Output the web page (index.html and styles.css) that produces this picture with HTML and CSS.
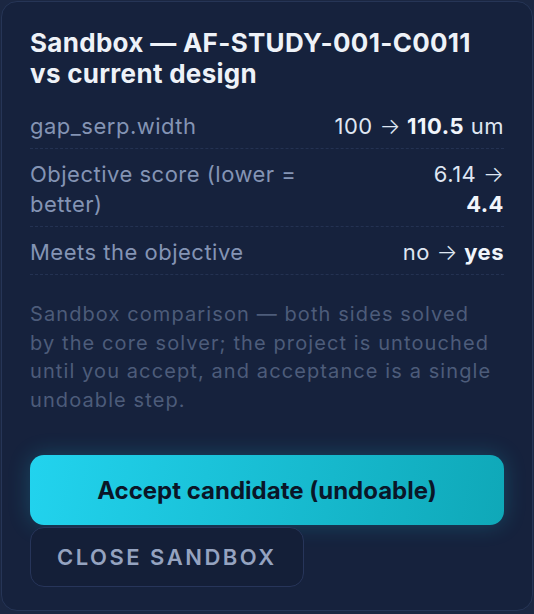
FILE: index.html
```html
<!DOCTYPE html>
<html lang="en">
<head>
    <meta charset="UTF-8">
    <meta name="viewport" content="width=device-width, initial-scale=1.0">
    <title>Sandbox comparison</title>
    <link rel="stylesheet" href="styles.css">
</head>
<body>
    <div class="sandbox-card">
        <h2 class="title">Sandbox — AF-STUDY-001-C0011 vs current design</h2>

        <div class="compare">
            <div class="compare-row">
                <span class="label">gap_serp.width</span>
                <span class="value">100 <span class="arrow">→</span> <strong>110.5</strong> um</span>
            </div>
            <div class="compare-row">
                <span class="label">Objective score (lower = better)</span>
                <span class="value">6.14 <span class="arrow">→</span> <strong>4.4</strong></span>
            </div>
            <div class="compare-row">
                <span class="label">Meets the objective</span>
                <span class="value">no <span class="arrow">→</span> <strong>yes</strong></span>
            </div>
        </div>

        <p class="note">Sandbox comparison — both sides solved by the core solver; the project is untouched until you accept, and acceptance is a single undoable step.</p>

        <div class="actions">
            <button class="btn-accept">Accept candidate (undoable)</button>
            <button class="btn-close">Close sandbox</button>
        </div>
    </div>
</body>
</html>
```

FILE: styles.css
```css
body {
    margin: 0;
    padding: 1px;
    background: #1b2742;
    font-family: 'Inter', 'Noto Sans', sans-serif;
    color: #e2e8f0;
}

.sandbox-card {
    background: #16223d;
    border: 1px solid #263556;
    border-radius: 16px;
    padding: 25px 28px 23px;
}

.title {
    margin: 0 0 12px;
    font-size: 26px;
    line-height: 31px;
    font-weight: 700;
    letter-spacing: 0.3px;
    color: #eef2f8;
}

.compare-row {
    display: flex;
    justify-content: space-between;
    gap: 24px;
    padding: 10px 0 7px;
    border-bottom: 1px dashed #243252;
    font-size: 22px;
    line-height: 30px;
    letter-spacing: 0.5px;
}

.label {
    color: #8494b4;
}

.value {
    color: #dfe6f2;
    text-align: right;
}

.value strong {
    color: #f1f5fb;
    font-weight: 700;
}

.arrow {
    font-weight: 300;
    letter-spacing: 0;
}

.note {
    margin: 25px 0 0;
    padding-right: 10px;
    font-size: 20px;
    line-height: 28.5px;
    letter-spacing: 1.1px;
    color: #4d5c7a;
}

.actions {
    margin-top: 41px;
    display: flex;
    flex-direction: column;
    align-items: flex-start;
    gap: 2px;
}

button {
    font-family: inherit;
    cursor: pointer;
}

.btn-accept {
    width: 100%;
    height: 70px;
    border: none;
    border-radius: 14px;
    background: linear-gradient(100deg, #22d3ee 0%, #0fa8b8 100%);
    color: #0a1628;
    font-size: 24px;
    font-weight: 700;
    box-shadow: 0 0 22px rgba(34, 211, 238, 0.22);
}

.btn-close {
    height: 60px;
    padding: 0 26px;
    border: 1px solid #27355a;
    border-radius: 14px;
    background: #141f38;
    color: #95a3c0;
    font-size: 22px;
    font-weight: 600;
    letter-spacing: 2.5px;
    text-transform: uppercase;
}
```
